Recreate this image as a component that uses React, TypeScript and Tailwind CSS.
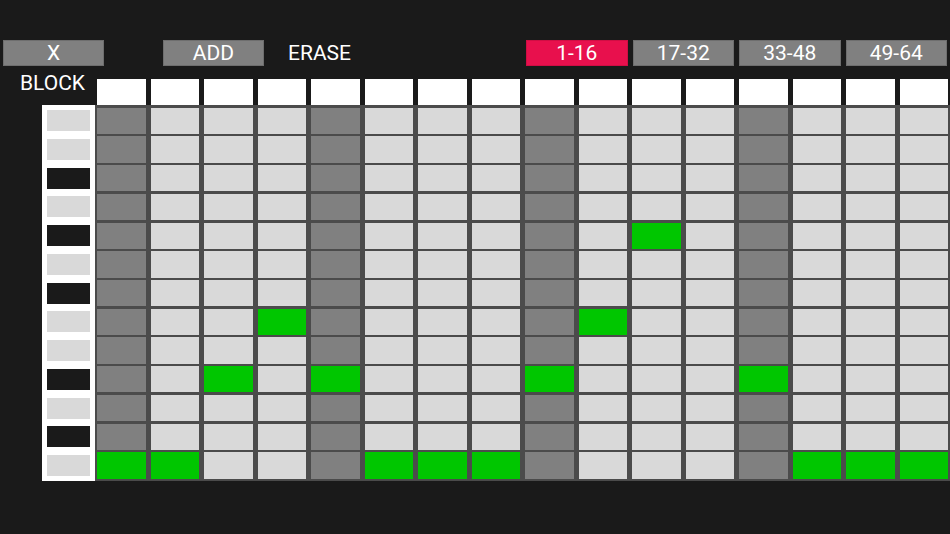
import React from 'react';

const DARK_COLS = [0, 4, 8, 12];
const BLACK_KEYS = [2, 4, 6, 9, 11];
const NOTES: Record<number, number[]> = {
  4: [10],
  7: [3, 9],
  9: [2, 4, 8, 12],
  12: [0, 1, 5, 6, 7, 13, 14, 15],
};
const PAGES = ['1-16', '17-32', '33-48', '49-64'];

const rows = Array.from({ length: 13 }, (_, i) => i);
const cols = Array.from({ length: 16 }, (_, i) => i);

function cellColor(r: number, c: number) {
  if (NOTES[r]?.includes(c)) return 'bg-[#00c600]';
  if (DARK_COLS.includes(c)) return 'bg-[#808080]';
  return 'bg-[#d9d9d9]';
}

const App: React.FC = () => {
  return (
    <div
      className="w-[950px] h-[534px] bg-[#1a1a1a] text-white pt-[40px] overflow-hidden"
      style={{ fontFamily: 'Roboto, "Liberation Sans", sans-serif' }}
    >
      {/* top bar */}
      <div className="flex h-[26px] text-[21px] leading-none">
        <button className="ml-[3px] w-[101px] bg-[#808080] border border-[#6e6e6e] flex items-center justify-center pt-[1px]">
          X
        </button>
        <button className="ml-[59px] w-[101px] bg-[#808080] border border-[#6e6e6e] flex items-center justify-center pt-[1px]">
          ADD
        </button>
        <button className="ml-[5px] w-[101px] flex items-center justify-center pt-[1px]">ERASE</button>
        <div className="ml-auto mr-[3px] flex gap-[5px]">
          {PAGES.map((p, i) => (
            <button
              key={p}
              className={`w-[101.5px] flex items-center justify-center border pt-[1px] ${
                i === 0 ? 'bg-[#e8104d] border-[#d00d44]' : 'bg-[#808080] border-[#6e6e6e]'
              }`}
            >
              {p}
            </button>
          ))}
        </div>
      </div>

      {/* header row */}
      <div className="flex mt-[13px] h-[26px]">
        <div className="w-[95px] -mt-[8px] h-[25px] pl-[20px] text-[21px] leading-[25px]">BLOCK</div>
        <div className="w-[855px] grid grid-cols-16 gap-x-[5px] px-[2px]">
          {cols.map((c) => (
            <div key={c} className="bg-white" />
          ))}
        </div>
      </div>

      {/* keys + grid */}
      <div className="flex">
        <div className="ml-[42px] w-[53px] h-[376px] bg-white px-[5px] pt-[2.7px] pb-[2.4px] grid grid-rows-13 gap-y-[2.4px]">
          {rows.map((r) => (
            <div key={r} className="flex items-center">
              <div className={`w-full h-[21px] ${BLACK_KEYS.includes(r) ? 'bg-[#1a1a1a]' : 'bg-[#d9d9d9]'}`} />
            </div>
          ))}
        </div>
        <div className="w-[855px] h-[376px] bg-[#4b4b4b] px-[2px] pt-[2.7px] pb-[2.4px] grid grid-cols-16 grid-rows-13 gap-x-[5px] gap-y-[2.4px]">
          {rows.map((r) =>
            cols.map((c) => <div key={`${r}-${c}`} className={cellColor(r, c)} />)
          )}
        </div>
      </div>
    </div>
  );
};

export default App;
